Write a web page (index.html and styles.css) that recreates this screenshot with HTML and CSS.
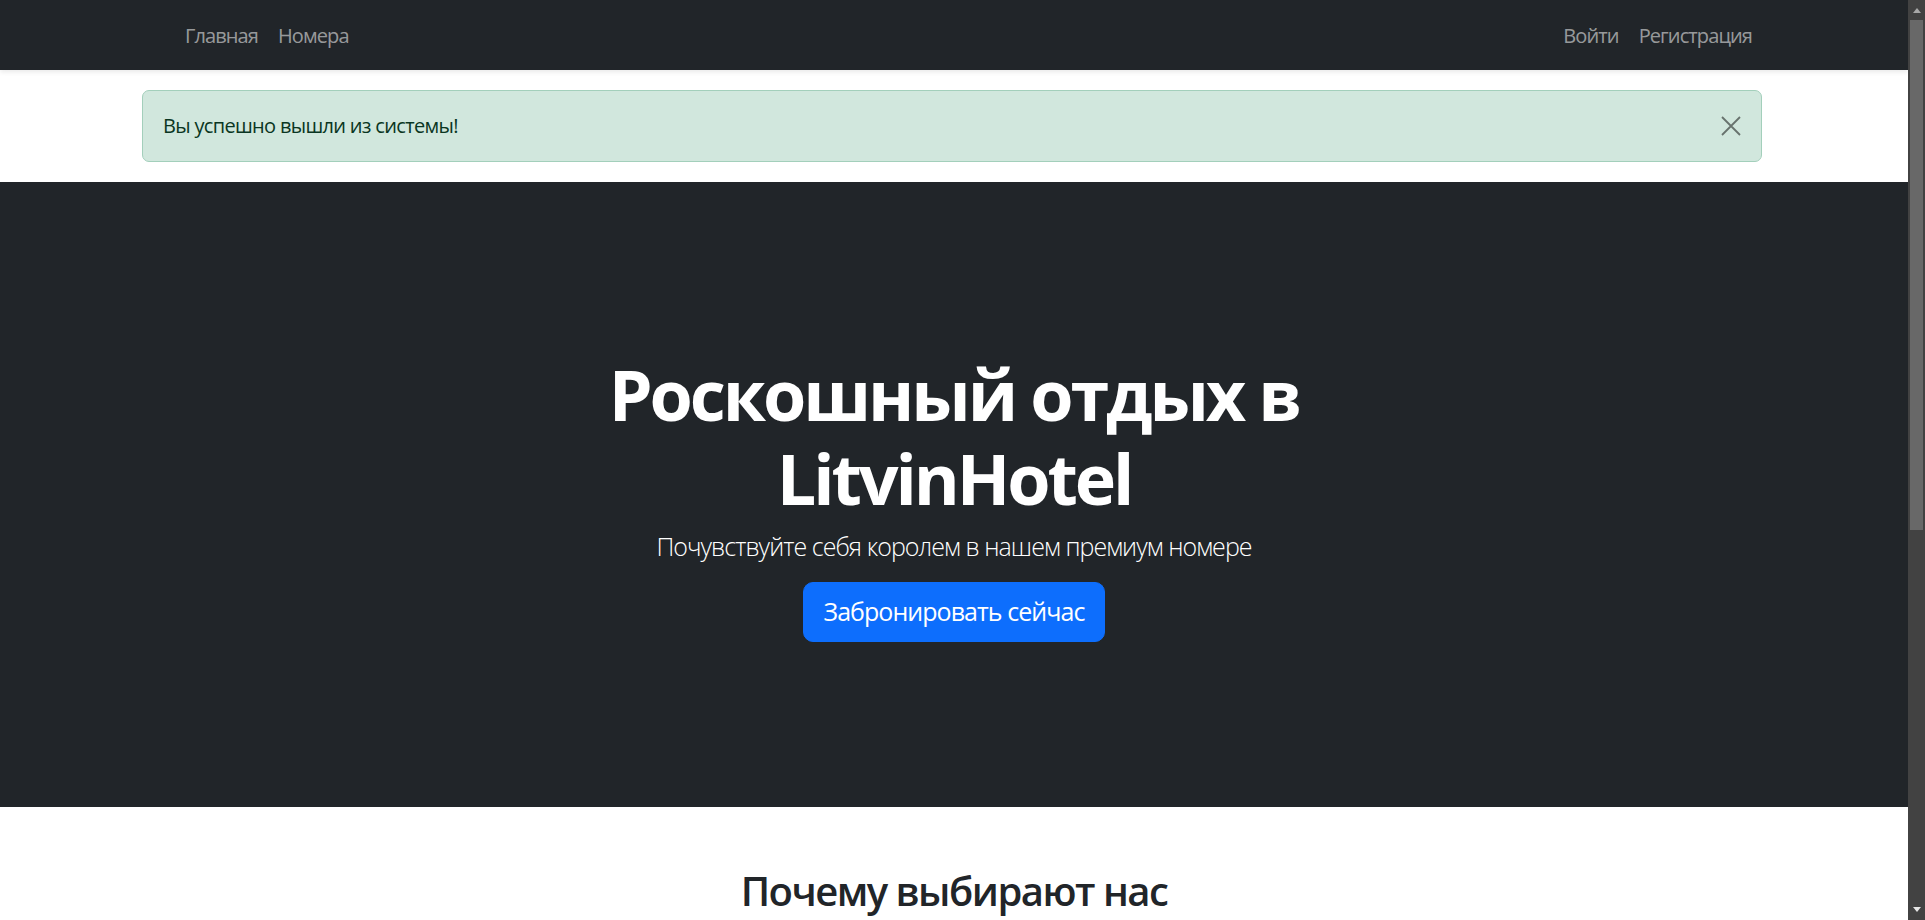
FILE: index.html
```html
<!DOCTYPE html>
<html lang="ru">
<head>
<meta charset="utf-8">
<title>LitvinHotel</title>
<link rel="stylesheet" href="styles.css">
</head>
<body>
<div class="screen">
  <div class="page">
    <nav class="navbar">
      <div class="container nav-inner">
        <ul class="nav-links nav-left">
          <li><a href="#">Главная</a></li>
          <li><a href="#">Номера</a></li>
        </ul>
        <ul class="nav-links">
          <li><a href="#">Войти</a></li>
          <li><a href="#">Регистрация</a></li>
        </ul>
      </div>
    </nav>
    <div class="container">
      <div class="alert">
        <span>Вы успешно вышли из системы!</span>
        <button class="btn-close" type="button" aria-label="Закрыть">
          <svg viewBox="0 0 20 20" width="20" height="20"><path d="M1 1 L19 19 M19 1 L1 19" stroke="#000" stroke-width="1.8" fill="none"/></svg>
        </button>
      </div>
    </div>
    <section class="hero">
      <div class="hero-content">
        <h1 class="hero-title">Роскошный отдых в LitvinHotel</h1>
        <p class="lead">Почувствуйте себя королем в нашем премиум номере</p>
        <a class="btn-primary" href="#">Забронировать сейчас</a>
      </div>
    </section>
    <section class="features">
      <h2 class="section-title">Почему выбирают нас</h2>
    </section>
  </div>
  <div class="scrollbar">
    <div class="sb-arrow sb-up"></div>
    <div class="sb-track"><div class="sb-thumb"></div></div>
    <div class="sb-arrow sb-down"></div>
  </div>
</div>
</body>
</html>
```
FILE: styles.css
```css
* { box-sizing: border-box; }
html, body { margin: 0; padding: 0; }
body {
  font-family: "Open Sans", "Noto Sans", sans-serif;
  font-size: 20px;
  line-height: 1.5;
  color: #212529;
  background: #fff;
  overflow: hidden;
}
.screen {
  display: flex;
  width: 1925px;
  height: 920px;
}
.page {
  width: 1908px;
  height: 920px;
  overflow: hidden;
  background: #fff;
}
.container {
  margin: 0 146px 0 142px;
}
.navbar {
  background: #212529;
  height: 70px;
  padding: 10px 0;
  box-shadow: 0 2px 5px rgba(0,0,0,.09);
  position: relative;
  z-index: 1;
}
.nav-inner {
  display: flex;
  justify-content: space-between;
  align-items: center;
  height: 50px;
}
.nav-links {
  list-style: none;
  margin: 0;
  padding: 0;
  display: flex;
}
.nav-left { padding-left: 33px; }
.nav-links a {
  display: block;
  padding: 11px 10px 9px;
  color: rgba(255,255,255,.55);
  text-decoration: none;
  line-height: 30px;
  letter-spacing: -0.045em;
}
.alert {
  margin: 20px 0;
  height: 72px;
  padding: 0 20px;
  border: 1px solid #a3cfbb;
  border-radius: 7px;
  background: #d1e7dd;
  color: #0a3622;
  display: flex;
  align-items: center;
  justify-content: space-between;
  letter-spacing: -0.034em;
}
.btn-close {
  width: 20px;
  height: 20px;
  padding: 0;
  border: 0;
  background: transparent;
  opacity: .5;
  display: flex;
}
.hero {
  background: #212529;
  color: #fff;
  height: 625px;
  display: flex;
  align-items: center;
  justify-content: center;
  text-align: center;
}
.hero-content {
  width: 820px;
  display: flex;
  flex-direction: column;
  align-items: center;
  padding-top: 4px;
}
.hero-title {
  margin: 0 0 8px;
  font-size: 70px;
  line-height: 84px;
  font-weight: 700;
  letter-spacing: -0.044em;
}
.lead {
  margin: 0 0 17px;
  font-size: 25px;
  font-weight: 300;
  line-height: 37.5px;
  letter-spacing: -0.038em;
}
.btn-primary {
  display: inline-block;
  background: #0d6efd;
  border: 1px solid #0d6efd;
  color: #fff;
  text-decoration: none;
  font-size: 25px;
  line-height: 37.5px;
  padding: 10px 20px;
  border-radius: 10px;
  letter-spacing: -0.038em;
}
.features {
  padding-top: 60px;
  text-align: center;
}
.section-title {
  margin: 0;
  font-size: 40px;
  font-weight: 600;
  line-height: 48px;
  letter-spacing: -0.038em;
}
.scrollbar {
  width: 17px;
  height: 920px;
  background: #424242;
  display: flex;
  flex-direction: column;
  align-items: center;
}
.sb-arrow {
  width: 0;
  height: 0;
  border-left: 4px solid transparent;
  border-right: 4px solid transparent;
}
.sb-up {
  margin-top: 8px;
  border-bottom: 5px solid #a8a8a8;
}
.sb-down {
  margin-bottom: 8px;
  border-top: 5px solid #e6e6e6;
}
.sb-track {
  flex: 1;
  width: 100%;
  padding: 7px 2px 0;
}
.sb-thumb {
  height: 510px;
  background: #686868;
}
```
